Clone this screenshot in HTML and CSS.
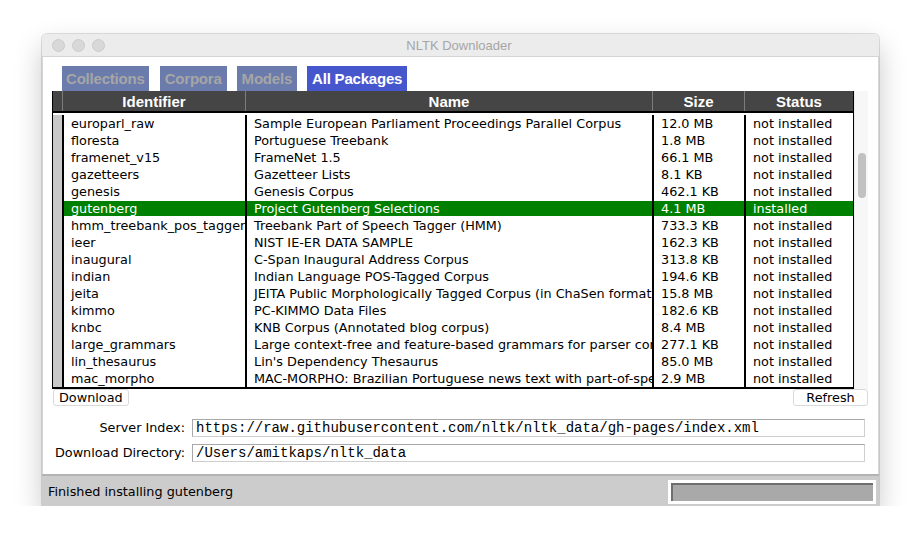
FILE: index.html
```html
<!DOCTYPE html>
<html>
<head>
<meta charset="utf-8">
<title>NLTK Downloader</title>
<link rel="stylesheet" href="styles.css">
</head>
<body>
<div class="window">
  <div class="titlebar">
    <div class="lights"><span class="light"></span><span class="light"></span><span class="light"></span></div>
    <div class="title">NLTK Downloader</div>
  </div>
  <div class="content">
    <div class="tabs">
      <div class="tab">Collections</div>
      <div class="tab wide">Corpora</div>
      <div class="tab wide">Models</div>
      <div class="tab active">All Packages</div>
    </div>
    <div class="tablewrap">
      <div class="table">
        <div class="row head">
          <div class="cell strip"></div>
          <div class="cell">Identifier</div>
          <div class="cell">Name</div>
          <div class="cell">Size</div>
          <div class="cell">Status</div>
        </div>
        <div class="body">
          <div class="row"><div class="cell strip"></div><div class="cell">europarl_raw</div><div class="cell">Sample European Parliament Proceedings Parallel Corpus</div><div class="cell">12.0 MB</div><div class="cell">not installed</div></div>
          <div class="row"><div class="cell strip"></div><div class="cell">floresta</div><div class="cell">Portuguese Treebank</div><div class="cell">1.8 MB</div><div class="cell">not installed</div></div>
          <div class="row"><div class="cell strip"></div><div class="cell">framenet_v15</div><div class="cell">FrameNet 1.5</div><div class="cell">66.1 MB</div><div class="cell">not installed</div></div>
          <div class="row"><div class="cell strip"></div><div class="cell">gazetteers</div><div class="cell">Gazetteer Lists</div><div class="cell">8.1 KB</div><div class="cell">not installed</div></div>
          <div class="row"><div class="cell strip"></div><div class="cell">genesis</div><div class="cell">Genesis Corpus</div><div class="cell">462.1 KB</div><div class="cell">not installed</div></div>
          <div class="row sel"><div class="cell strip"></div><div class="cell">gutenberg</div><div class="cell">Project Gutenberg Selections</div><div class="cell">4.1 MB</div><div class="cell">installed</div></div>
          <div class="row"><div class="cell strip"></div><div class="cell">hmm_treebank_pos_tagger</div><div class="cell">Treebank Part of Speech Tagger (HMM)</div><div class="cell">733.3 KB</div><div class="cell">not installed</div></div>
          <div class="row"><div class="cell strip"></div><div class="cell">ieer</div><div class="cell">NIST IE-ER DATA SAMPLE</div><div class="cell">162.3 KB</div><div class="cell">not installed</div></div>
          <div class="row"><div class="cell strip"></div><div class="cell">inaugural</div><div class="cell">C-Span Inaugural Address Corpus</div><div class="cell">313.8 KB</div><div class="cell">not installed</div></div>
          <div class="row"><div class="cell strip"></div><div class="cell">indian</div><div class="cell">Indian Language POS-Tagged Corpus</div><div class="cell">194.6 KB</div><div class="cell">not installed</div></div>
          <div class="row"><div class="cell strip"></div><div class="cell">jeita</div><div class="cell">JEITA Public Morphologically Tagged Corpus (in ChaSen format)</div><div class="cell">15.8 MB</div><div class="cell">not installed</div></div>
          <div class="row"><div class="cell strip"></div><div class="cell">kimmo</div><div class="cell">PC-KIMMO Data Files</div><div class="cell">182.6 KB</div><div class="cell">not installed</div></div>
          <div class="row"><div class="cell strip"></div><div class="cell">knbc</div><div class="cell">KNB Corpus (Annotated blog corpus)</div><div class="cell">8.4 MB</div><div class="cell">not installed</div></div>
          <div class="row"><div class="cell strip"></div><div class="cell">large_grammars</div><div class="cell">Large context-free and feature-based grammars for parser comparison</div><div class="cell">277.1 KB</div><div class="cell">not installed</div></div>
          <div class="row"><div class="cell strip"></div><div class="cell">lin_thesaurus</div><div class="cell">Lin's Dependency Thesaurus</div><div class="cell">85.0 MB</div><div class="cell">not installed</div></div>
          <div class="row"><div class="cell strip"></div><div class="cell">mac_morpho</div><div class="cell">MAC-MORPHO: Brazilian Portuguese news text with part-of-speech tags</div><div class="cell">2.9 MB</div><div class="cell">not installed</div></div>
        </div>
      </div>
      <div class="scrollbar"><div class="thumb"></div></div>
    </div>
    <div class="buttons">
      <button class="btn">Download</button>
      <button class="btn">Refresh</button>
    </div>
    <div class="form">
      <label class="label">Server Index:</label>
      <div class="entry">https://raw.githubusercontent.com/nltk/nltk_data/gh-pages/index.xml</div>
      <label class="label">Download Directory:</label>
      <div class="entry">/Users/amitkaps/nltk_data</div>
    </div>
  </div>
  <div class="statusbar">
    <div class="status">Finished installing gutenberg</div>
    <div class="progress"><div class="progress-inner"></div></div>
  </div>
</div>
</body>
</html>
```
FILE: styles.css
```css
html, body {
  margin: 0;
  padding: 0;
  background: #ffffff;
}
body {
  font-family: "DejaVu Sans", "Liberation Sans", sans-serif;
  font-size: 12.8px;
  color: #000;
}
.window {
  margin: 34px 0 0 42px;
  width: 837px;
  height: 472px;
  display: flex;
  flex-direction: column;
  border-radius: 5px 5px 0 0;
  box-shadow: 0 12px 28px rgba(0,0,0,0.22), 0 0 0 1px rgba(0,0,0,0.12);
  overflow: hidden;
  background: #fff;
}
.titlebar {
  height: 22px;
  flex: 0 0 22px;
  background: #ececec;
  border-bottom: 1px solid #d4d4d4;
  display: flex;
  align-items: center;
}
.lights {
  display: flex;
  gap: 7px;
  padding-left: 10px;
}
.light {
  width: 11px;
  height: 11px;
  border-radius: 50%;
  background: #d8d8d8;
  border: 1px solid #cbcbcb;
}
.title {
  flex: 1;
  text-align: center;
  font-family: "Liberation Sans", sans-serif;
  font-size: 13px;
  color: #a6a6a6;
  margin-right: 66px;
}
.content {
  flex: 1;
  padding: 9px 10px 0 9px;
  border-left: 1px solid #d6d6d6;
  border-right: 1px solid #d6d6d6;
}
.tabs {
  display: flex;
  gap: 10px;
  margin-left: 10px;
  height: 25px;
}
.tab {
  background: #6b7bac;
  color: #a6a6a6;
  font-family: "Liberation Sans", sans-serif;
  font-weight: bold;
  font-size: 15px;
  line-height: 25px;
  padding: 0 4px;
  letter-spacing: -0.2px;
}
.tab:first-child {
  margin-right: 1px;
}
.tab.wide {
  padding: 0 5px;
}
.tab.active {
  background: #4657cd;
  color: #ffffff;
  padding: 0 5px;
}
.tablewrap {
  display: flex;
}
.table {
  width: 802px;
  border-left: 1px solid #000;
  border-right: 1px solid #000;
  border-bottom: 2px solid #000;
}
.row {
  display: grid;
  grid-template-columns: 9px 183px 407px 92px 109px;
  height: 17px;
}
.cell {
  border-left: 2px solid #000;
  padding-left: 7px;
  white-space: nowrap;
  overflow: hidden;
  line-height: 17px;
}
.cell.strip {
  border-left: 0;
  padding: 0;
  background: #c9c9c9;
}
.row.head {
  height: 20px;
  background: #454545;
  border-bottom: 2px solid #000;
}
.row.head .cell {
  border-left: 1px solid #7c7c7c;
  padding: 0;
  text-align: center;
  color: #fff;
  font-family: "Liberation Sans", sans-serif;
  font-weight: bold;
  font-size: 15px;
  line-height: 22px;
}
.row.head .cell.strip {
  border-left: 0;
  background: #454545;
}
.body {
  padding-top: 2px;
}
.row.sel .cell {
  color: #fff;
  background: linear-gradient(#008000, #008000) 0 1px / 100% 15px no-repeat;
}
.row.sel .cell.strip {
  background: #c9c9c9;
}
.scrollbar {
  width: 14px;
  background: #f7f7f7;
  border-left: 1px solid #ececec;
  position: relative;
}
.thumb {
  position: absolute;
  left: 3px;
  top: 62px;
  width: 8px;
  height: 45px;
  border-radius: 4px;
  background: #c1c1c1;
}
.buttons {
  display: flex;
  justify-content: space-between;
  height: 17px;
  padding-left: 1px;
}
.btn {
  font-family: "DejaVu Sans", sans-serif;
  font-size: 12.8px;
  height: 17px;
  padding: 0 5px;
  background: #fff;
  border: 1px solid #d9d9d9;
  border-radius: 3px;
  line-height: 15px;
  color: #000;
}
.btn:last-child {
  width: 75px;
}
.form {
  display: grid;
  grid-template-columns: 133px 1fr;
  column-gap: 7px;
  row-gap: 7px;
  margin-top: 13px;
  padding-right: 3px;
}
.label {
  text-align: right;
  line-height: 18px;
  white-space: nowrap;
}
.entry {
  height: 16px;
  border: 1px solid #a8a8a8;
  border-right-color: #cfcfcf;
  border-bottom-color: #cfcfcf;
  font-family: "Liberation Mono", monospace;
  font-size: 14px;
  line-height: 16px;
  padding-left: 3px;
  white-space: nowrap;
  overflow: hidden;
}
.statusbar {
  height: 30px;
  flex: 0 0 30px;
  background: #cccccc;
  border-top: 2px solid #b3b3b3;
  display: flex;
  align-items: center;
  justify-content: space-between;
  padding: 0 3px 0 6px;
}
.progress {
  width: 202px;
  height: 18px;
  padding: 3px;
  background: #fff;
  margin-top: 1px;
}
.progress-inner {
  height: 16px;
  background: #a9a9a9;
  border-top: 2px solid #6e6e6e;
  border-left: 2px solid #6e6e6e;
}
```
